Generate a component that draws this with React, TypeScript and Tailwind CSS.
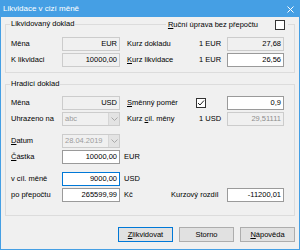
import React from "react";

type Kind = "disabled" | "white" | "focus" | "grey";

function Field({ value, w, kind }: { value: string; w: string; kind: Kind }) {
  const cls =
    kind === "disabled"
      ? "bg-[#f0f0f0] border-[#cccccc] text-black"
      : kind === "grey"
      ? "bg-[#f0f0f0] border-[#cccccc] text-[#8d8d8d]"
      : kind === "focus"
      ? "bg-white border-[#0078d7] text-black"
      : "bg-white border-[#9a9a9a] text-black";
  return (
    <div className={`${w} h-[14px] shrink-0 border ${cls} flex items-center justify-end pr-[2px] leading-none`}>
      {value}
    </div>
  );
}

function Combo({ value }: { value: string }) {
  return (
    <div className="w-[58px] h-[14px] shrink-0 border border-[#cccccc] bg-[#f0f0f0] flex items-center leading-none">
      <span className="flex-1 pl-[2px] text-[#9c9c9c]">{value}</span>
      <div className="w-[11px] h-full bg-[#e3e3e3] border-l border-[#d6d6d6] flex items-center justify-center">
        <svg width="7" height="4" viewBox="0 0 7 4">
          <path d="M0.5 0.5 L3.5 3.5 L6.5 0.5" fill="none" stroke="#a8a8a8" strokeWidth="1" />
        </svg>
      </div>
    </div>
  );
}

function U({ c }: { c: string }) {
  return <span className="underline decoration-1 underline-offset-[1px]">{c}</span>;
}

function Label({ w, children }: { w: string; children: React.ReactNode }) {
  return <span className={`${w} shrink-0 leading-none whitespace-nowrap`}>{children}</span>;
}

function Button({ children, focus }: { children: React.ReactNode; focus?: boolean }) {
  return (
    <div
      className={`w-[55px] h-[15px] flex items-center justify-center leading-none bg-[#e1e1e1] border ${
        focus ? "border-[#0078d7]" : "border-[#adadad]"
      }`}
    >
      {children}
    </div>
  );
}

export default function App() {
  return (
    <div className="w-[300px] h-[250px] border border-[#459fe4] bg-[#f0f0f0] flex flex-col font-['Liberation_Sans',Arial,sans-serif] text-[7.5px] text-black overflow-hidden">
      {/* title bar */}
      <div className="h-[16px] bg-[#459fe4] flex items-center justify-between pl-[2px] pr-[5px] text-white text-[8px] leading-none">
        <span>Likvidace v cizí měně</span>
        <svg width="7" height="7" viewBox="0 0 7 7">
          <path d="M0.5 0.5 L6.5 6.5 M6.5 0.5 L0.5 6.5" stroke="white" strokeWidth="1" />
        </svg>
      </div>

      <div className="pl-[4px] flex flex-col">
        {/* group 1 */}
        <div className="relative mt-[7px] w-[290px] h-[49px] border border-[#dcdcdc] pl-[5px] pt-[12px] flex flex-col gap-[2px]">
          <span className="absolute left-[4px] top-[-5px] px-[1px] bg-[#f0f0f0] leading-none">Likvidovaný doklad</span>
          <div className="absolute right-[6px] top-[-6px] h-[11px] pl-[2px] pr-[3px] bg-[#f0f0f0] flex items-center gap-[17px]">
            <span className="leading-none">
              <U c="R" />uční úprava bez přepočtu
            </span>
            <div className="w-[10px] h-[10px] border border-[#333333] bg-white" />
          </div>
          <div className="flex items-center h-[14px]">
            <Label w="w-[51px]">Měna</Label>
            <Field value="EUR" w="w-[58px]" kind="disabled" />
            <Label w="w-[72px] ml-[7px]">Kurz dokladu</Label>
            <Label w="w-[28px]">1 EUR</Label>
            <Field value="27,68" w="w-[57px]" kind="disabled" />
          </div>
          <div className="flex items-center h-[14px]">
            <Label w="w-[51px]">K likvidaci</Label>
            <Field value="10000,00" w="w-[58px]" kind="disabled" />
            <Label w="w-[72px] ml-[7px]">
              <U c="K" />urz likvidace
            </Label>
            <Label w="w-[28px]">1 EUR</Label>
            <Field value="26,56" w="w-[57px]" kind="white" />
          </div>
        </div>

        {/* group 2 */}
        <div className="relative mt-[11px] w-[290px] h-[132px] border border-[#dcdcdc] pl-[5px] pt-[11px] flex flex-col">
          <span className="absolute left-[4px] top-[-5px] px-[1px] bg-[#f0f0f0] leading-none">Hradící doklad</span>
          <div className="flex items-center h-[14px]">
            <Label w="w-[51px]">Měna</Label>
            <Field value="USD" w="w-[58px]" kind="disabled" />
            <Label w="w-[69px] ml-[7px]">
              <U c="S" />měnný poměr
            </Label>
            <div className="w-[10px] h-[10px] shrink-0 border border-[#333333] bg-white flex items-center justify-center">
              <svg width="8" height="8" viewBox="0 0 8 8">
                <path d="M1 4 L3 6 L7 1.5" fill="none" stroke="#222" strokeWidth="1" />
              </svg>
            </div>
            <div className="w-[21px] shrink-0" />
            <Field value="0,9" w="w-[57px]" kind="white" />
          </div>
          <div className="flex items-center h-[14px] mt-[2px]">
            <Label w="w-[51px]">Uhrazeno na</Label>
            <Combo value="abc" />
            <Label w="w-[72px] ml-[7px]">
              Kurz <U c="c" />íl. měny
            </Label>
            <Label w="w-[28px]">1 USD</Label>
            <Field value="29,51111" w="w-[57px]" kind="grey" />
          </div>
          <div className="flex items-center h-[14px] mt-[8px]">
            <Label w="w-[51px]">
              <U c="D" />atum
            </Label>
            <Combo value="28.04.2019" />
          </div>
          <div className="flex items-center h-[14px] mt-[2px]">
            <Label w="w-[51px]">
              <U c="Č" />ástka
            </Label>
            <Field value="10000,00" w="w-[58px]" kind="white" />
            <Label w="ml-[4px]">EUR</Label>
          </div>
          <div className="flex items-center h-[14px] mt-[8px]">
            <Label w="w-[51px]">v cíl. měně</Label>
            <Field value="9000,00" w="w-[58px]" kind="focus" />
            <Label w="ml-[4px]">USD</Label>
          </div>
          <div className="flex items-center h-[14px] mt-[2px]">
            <Label w="w-[51px]">po přepočtu</Label>
            <Field value="265599,99" w="w-[58px]" kind="white" />
            <Label w="w-[47px] ml-[4px]">Kč</Label>
            <Label w="w-[56px]">Kurzový rozdíl</Label>
            <Field value="-11200,01" w="w-[57px]" kind="white" />
          </div>
        </div>

        {/* buttons */}
        <div className="mt-[11px] w-[290px] flex justify-end gap-[6px]">
          <Button focus>
            <span>
              <U c="Z" />likvidovat
            </span>
          </Button>
          <Button>Storno</Button>
          <Button>
            <span>
              <U c="N" />ápověda
            </span>
          </Button>
        </div>
      </div>
    </div>
  );
}
